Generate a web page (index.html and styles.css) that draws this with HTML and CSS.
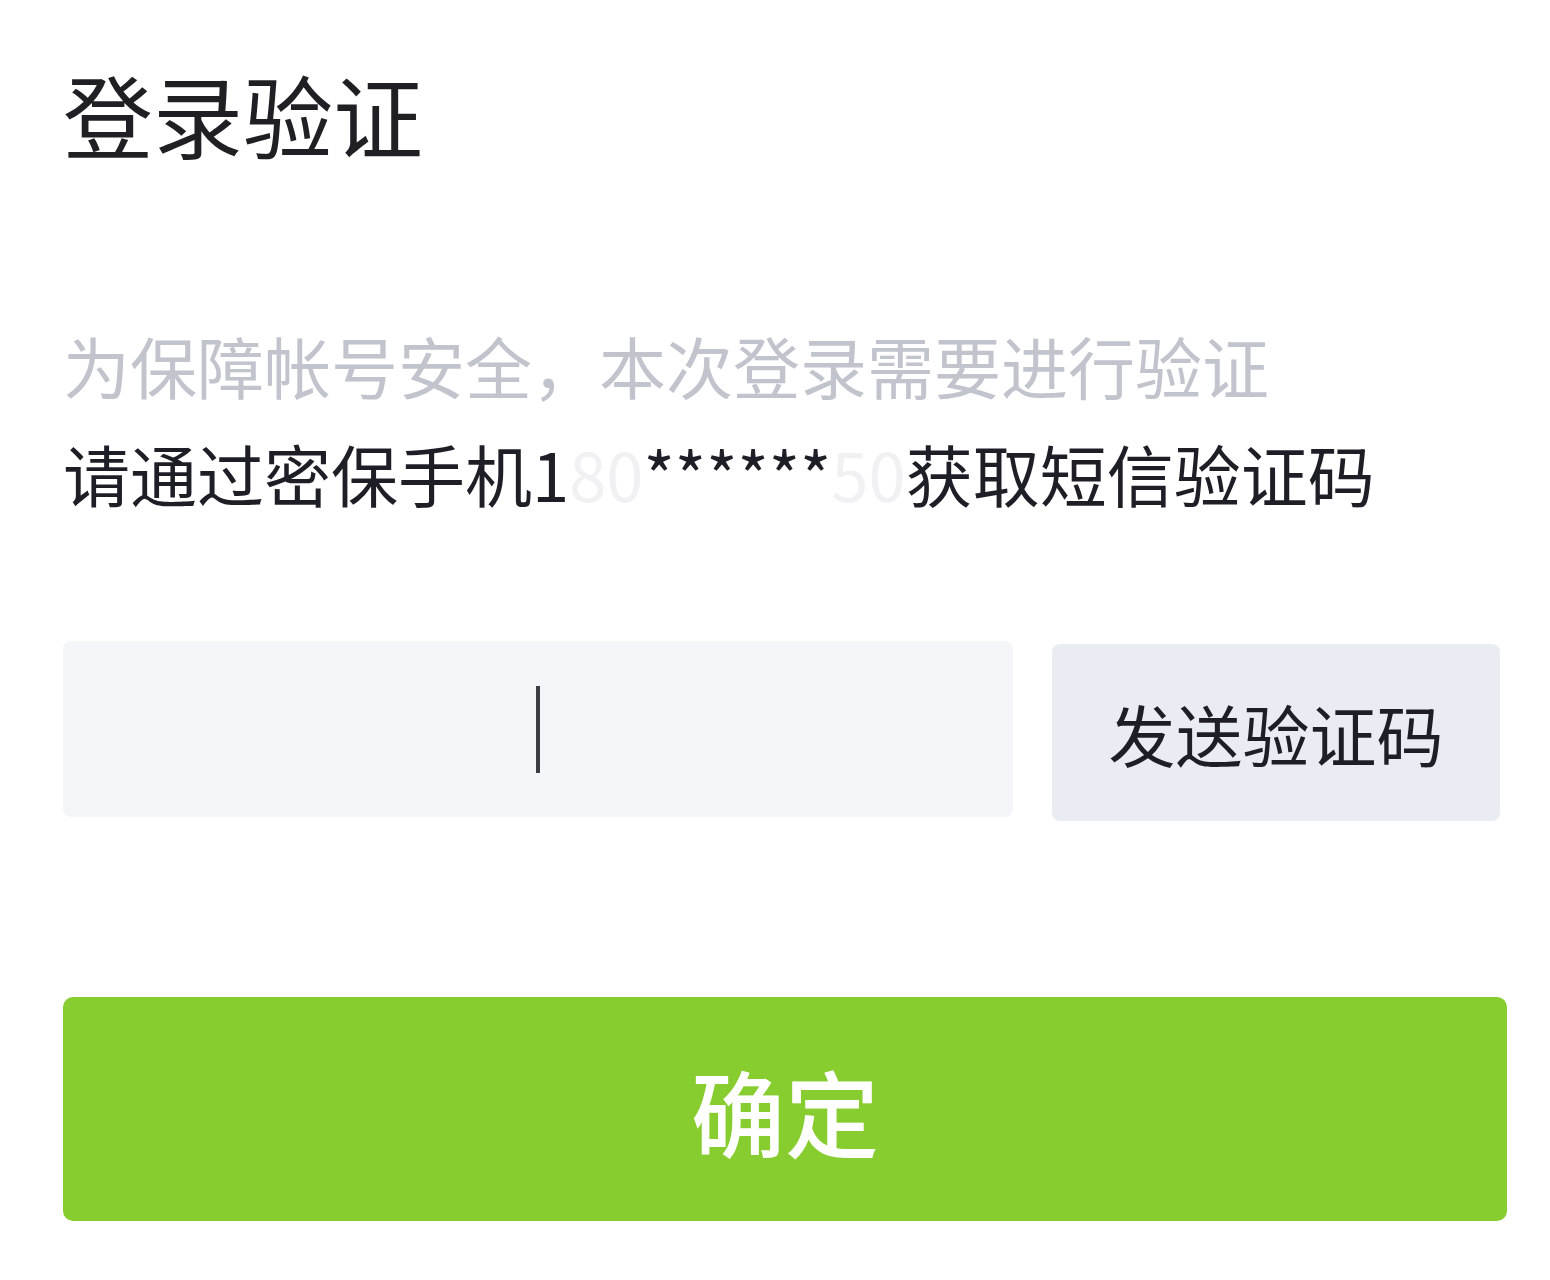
FILE: index.html
```html
<!DOCTYPE html>
<html lang="zh-CN">
<head>
  <meta charset="UTF-8">
  <meta name="viewport" content="width=device-width, initial-scale=1.0">
  <title>登录验证</title>
  <link rel="stylesheet" href="styles.css">
</head>
<body>
  <main class="verify">
    <h1>登录验证</h1>

    <p class="tip">为保障帐号安全，本次登录需要进行验证</p>
    <p class="phone">请通过密保手机<span>1</span><span class="blur">80</span>******<span class="blur">50</span>获取短信验证码</p>

    <div class="code-row">
      <div class="code-input"><span class="caret"></span></div>
      <button class="send">发送验证码</button>
    </div>

    <button class="confirm">确定</button>
  </main>
</body>
</html>
```

FILE: styles.css
```css
:root {
  --text: #1d1e26;
  --text-light: #c2c4cd;
  --input-bg: #f4f5f9;
  --send-bg: #e9ecf3;
  --green: #88cd2f;
}

* {
  box-sizing: border-box;
  margin: 0;
  padding: 0;
}

body {
  font-family: "Noto Sans CJK SC", "Noto Sans", sans-serif;
  background: #fff;
  color: var(--text);
}

.verify {
  width: 1444px;
  margin-left: 63px;
  padding-top: 68px;
}

h1 {
  font-size: 90px;
  line-height: 90px;
  font-weight: normal;
  color: #1f1f24;
}

.tip,
.phone {
  font-size: 67px;
  line-height: 67px;
  white-space: nowrap;
}

.tip {
  margin-top: 173px;
  color: var(--text-light);
}

.phone {
  margin-top: 41px;
}

.phone .blur {
  color: #f1f1f4;
}

.code-row {
  display: flex;
  align-items: flex-start;
  gap: 39px;
  margin-top: 135px;
}

.code-input {
  width: 950px;
  height: 176px;
  background: var(--input-bg);
  border-radius: 8px;
  display: flex;
  align-items: center;
  justify-content: center;
}

.caret {
  width: 4px;
  height: 87px;
  background: #3c3d44;
}

.send {
  width: 448px;
  height: 177px;
  margin-top: 3px;
  border: none;
  border-radius: 8px;
  background: var(--send-bg);
  color: var(--text);
  font-family: inherit;
  font-size: 67px;
  cursor: pointer;
}

.confirm {
  display: block;
  width: 1444px;
  height: 224px;
  margin-top: 176px;
  border: none;
  border-radius: 10px;
  background: var(--green);
  color: #fff;
  font-family: inherit;
  font-size: 94px;
  font-weight: 500;
  padding-top: 2px;
  cursor: pointer;
}
```
